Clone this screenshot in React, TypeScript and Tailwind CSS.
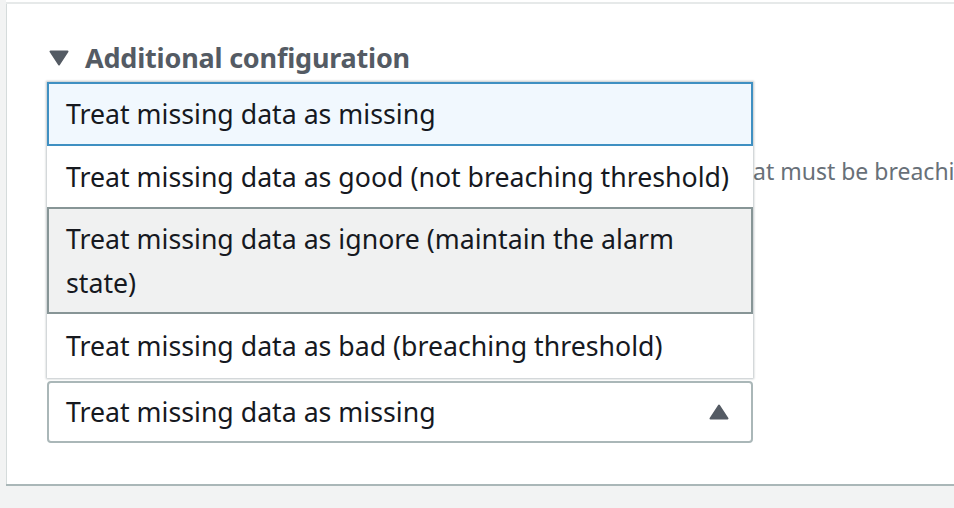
import React from "react";

const options = [
  "Treat missing data as missing",
  "Treat missing data as good (not breaching threshold)",
  "Treat missing data as ignore (maintain the alarm state)",
  "Treat missing data as bad (breaching threshold)",
];

function Caret({ up }: { up?: boolean }) {
  return (
    <svg width="20" height="16" viewBox="0 0 20 16" className={up ? "" : "rotate-180"}>
      <path d="M10 1.5 L18.5 14.5 L1.5 14.5 Z" fill="#545b64" stroke="#545b64" strokeWidth="2" strokeLinejoin="round" />
    </svg>
  );
}

export default function App() {
  return (
    <div
      className="w-[954px] h-[508px] overflow-hidden bg-[#f2f3f3] pl-[6px] text-[#16191f]"
      style={{ fontFamily: '"Noto Sans", "Open Sans", sans-serif' }}
    >
      <div className="h-[2px] bg-white" />
      <div className="h-[2px] bg-[#e6e9e9]" />
      <div className="h-[480px] bg-white border-l border-[#d5dbdb] shadow-[0_2px_0_#aab7b8] overflow-hidden pl-[40px]">
        <div className="flex items-center h-[108px] pl-[2px]">
          <Caret />
          <span className="ml-[16px] text-[27px] font-bold text-[#545b64] tracking-[-0.2px]">
            Additional configuration
          </span>
        </div>
        <div className="relative h-[265px]">
          <div className="flex h-[76px] items-end whitespace-nowrap pl-[706px] text-[23px] text-[#687078]">
            at must be breaching to trigger the alarm
          </div>
        </div>
        <div className="relative w-[706px]">
          <div className="absolute bottom-[calc(100%+3px)] left-0 w-[706px] bg-white shadow-[0_0_2px_1px_rgba(0,28,36,0.25)] text-[26.7px] leading-[44px]">
            <div className="flex h-[64px] items-center border-2 border-[#3f90c2] bg-[#f1f8fe] px-[17px]">
              {options[0]}
            </div>
            <div className="flex h-[61px] items-center whitespace-nowrap px-[19px]">{options[1]}</div>
            <div className="flex h-[107px] items-center border-2 border-[#879596] bg-[#f0f1f1] px-[17px] pr-[40px]">
              {options[2]}
            </div>
            <div className="flex h-[64px] items-center whitespace-nowrap px-[19px]">{options[3]}</div>
          </div>
          <div className="mt-[4px] flex h-[62px] items-center justify-between rounded-[4px] border-2 border-[#aab7b8] pl-[17px] pr-[22px] text-[26.7px]">
            <span>{options[0]}</span>
            <Caret up />
          </div>
        </div>
      </div>
    </div>
  );
}
